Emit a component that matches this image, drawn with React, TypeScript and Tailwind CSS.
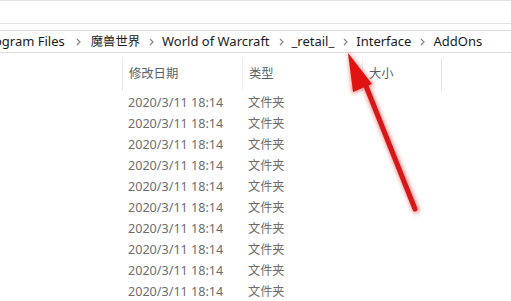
import React from "react";

const Chevron = ({ first }: { first?: boolean }) => (
  <span className={first ? "flex items-center pl-[11px] pr-[10px]" : "flex items-center pl-[9px] pr-[8px]"}>
    <svg width="5" height="8" viewBox="0 0 5 8">
      <path d="M1 1 L4 4 L1 7" fill="none" stroke="#8a8a8a" strokeWidth="1.3" />
    </svg>
  </span>
);

const crumbs: { t: string; cjk?: boolean }[] = [
  { t: "Program Files" },
  { t: "魔兽世界", cjk: true },
  { t: "World of Warcraft" },
  { t: "_retail_" },
  { t: "Interface" },
  { t: "AddOns" },
];

export default function App() {
  const rows = Array.from({ length: 10 });
  return (
    <div
      className="relative w-[511px] h-[301px] overflow-hidden bg-white"
      style={{ fontFamily: '"Noto Sans", "Noto Sans CJK SC", sans-serif' }}
    >
      <div className="h-[24px] border-t border-b border-[#e3e3e3]" />
      <div className="h-[6px]" />
      <div className="h-[23px] border-t border-b border-[#dcdcdc] flex items-center text-[13px] text-[#1a1a1a] whitespace-nowrap">
        <div className="flex items-center ml-[-19px] pt-[1px]">
          {crumbs.map((c, i) => (
            <React.Fragment key={c.t}>
              {i > 0 && <Chevron first={i === 1} />}
              <span className={c.cjk ? "text-[12.3px]" : ""}>{c.t}</span>
            </React.Fragment>
          ))}
        </div>
      </div>
      <div className="flex h-[38px] pt-[5px] text-[12.3px] text-[#5a5f66]">
        <div className="w-[122px]" />
        <div className="w-[120px] border-l border-[#e8e8e8] pl-[6px] flex items-center">修改日期</div>
        <div className="w-[120px] border-l border-[#efefef] pl-[6px] flex items-center">类型</div>
        <div className="w-[79px] border-l border-[#f0f0f0] pl-[6px] flex items-center">大小</div>
        <div className="flex-1 border-l border-[#e3e3e3]" />
      </div>
      <div className="flex flex-col pt-[2px] text-[#6d6d6d]">
        {rows.map((_, i) => (
          <div key={i} className="flex h-[21px] items-center">
            <div className="w-[128px]" />
            <div className="w-[120px] text-[12.6px]">2020/3/11 18:14</div>
            <div className="text-[12.2px]">文件夹</div>
          </div>
        ))}
      </div>
      <svg
        className="absolute left-0 top-0 pointer-events-none"
        width="511"
        height="301"
        viewBox="0 0 511 301"
      >
        <defs>
          <filter id="blur" x="-50%" y="-50%" width="200%" height="200%">
            <feGaussianBlur stdDeviation="2" />
          </filter>
        </defs>
        <g filter="url(#blur)" opacity="0.5">
          <line x1="366" y1="86" x2="416" y2="210" stroke="#e02020" strokeWidth="7" strokeLinecap="round" />
          <polygon points="348,52 352,94 374,85" fill="#e02020" />
        </g>
        <line x1="366" y1="86" x2="415" y2="209" stroke="#d71818" strokeWidth="5" strokeLinecap="round" />
        <polygon points="348,53 353,92 372,84" fill="#e01212" />
      </svg>
    </div>
  );
}
